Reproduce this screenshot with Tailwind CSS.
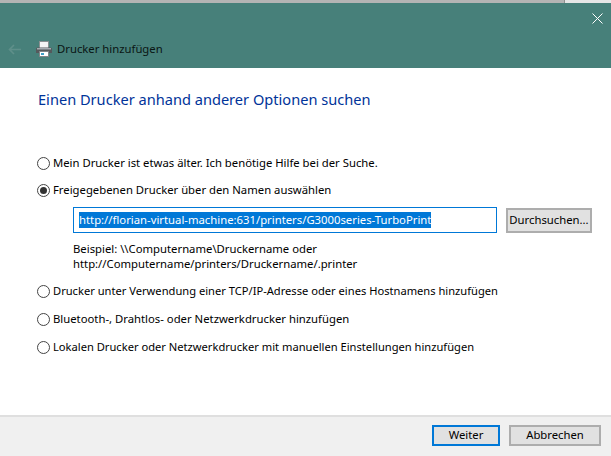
<!DOCTYPE html>
<html><head><meta charset="utf-8"><script src="https://cdn.jsdelivr.net/npm/@tailwindcss/browser@4"></script></head>
<body class="m-0">
<div class="w-[611px] h-[456px] overflow-hidden flex flex-col bg-white text-black text-[11.3px] leading-[16px] font-['Noto_Sans','Open_Sans',sans-serif]">
  <div class="h-[3px] flex shrink-0"><div class="w-[564px] bg-[#b4b4b4]"></div><div class="w-px bg-[#8e8e8e]"></div><div class="flex-1 bg-[#e6e6e6]"></div></div>
  <header class="h-[65px] bg-[#47807a] flex flex-col shrink-0 relative">
    <svg class="absolute left-[592px] top-[10px]" width="11" height="11" viewBox="0 0 11 11"><path d="M.5.5l10 10M10.5.5l-10 10" stroke="#fff" fill="none"/></svg>
    <div class="mt-[34px] flex items-center h-[24px]">
      <svg class="ml-[8px]" width="13" height="11" viewBox="0 0 13 11"><path d="M13 5.5H1.5M6 1L1.5 5.5 6 10" stroke="#5f8f8a" stroke-width="1.6" fill="none"/></svg>
      <svg class="ml-[15px]" width="16" height="16" viewBox="0 0 16 16"><rect x="3.5" y=".5" width="9" height="7" fill="#f4f4f4" stroke="#8a8f90"/><path d="M1.5 6.5h13a1.5 1.5 0 0 1 1.5 1.5v4H0V8a1.5 1.5 0 0 1 1.5-1.5z" fill="#55595c"/><rect x="1" y="7" width="14" height="1.5" fill="#a6abb0"/><rect x="3.5" y="10.5" width="9" height="5" fill="#fff" stroke="#808487"/><rect x="5" y="12" width="3" height="2" fill="#3f9fc6"/></svg>
      <span class="ml-[5px] text-[#0a1614]">Drucker hinzufügen</span>
    </div>
  </header>
  <main class="flex-1 pl-[37px] pr-[19px] flex flex-col">
    <h1 class="mt-[21px] ml-px text-[14.6px] leading-[20px] text-[#003399] font-normal">Einen Drucker anhand anderer Optionen suchen</h1>
    <div class="mt-[46px] flex flex-col">
      <label class="flex items-center h-[16px] gap-[3px]"><span class="w-[13px] h-[13px] rounded-full border border-[#444] bg-white"></span><span>Mein Drucker ist etwas älter. Ich benötige Hilfe bei der Suche.</span></label>
      <label class="mt-[11px] flex items-center h-[16px] gap-[3px]"><span class="w-[13px] h-[13px] rounded-full border border-[#444] bg-white flex items-center justify-center"><span class="w-[7px] h-[7px] rounded-full bg-[#333]"></span></span><span>Freigegebenen Drucker über den Namen auswählen</span></label>
      <div class="mt-[9px] ml-[36px] flex gap-[9px] items-center">
        <div class="w-[424px] h-[26px] border border-[#0078d7] bg-white pl-[5px] flex items-center"><span class="bg-[#0078d7] text-white h-[16px] whitespace-nowrap">http://florian-virtual-machine:631/printers/G3000series-TurboPrint</span></div>
        <button class="w-[86px] h-[25px] border-2 border-[#adadad] bg-[#e1e1e1] text-center leading-[16px]">Durchsuchen...</button>
      </div>
      <p class="mt-[8px] ml-[36px] leading-[15px]">Beispiel: \\Computername\Druckername oder<br>http://Computername/printers/Druckername/.printer</p>
      <label class="mt-[12px] flex items-center h-[16px] gap-[3px]"><span class="w-[13px] h-[13px] rounded-full border border-[#444] bg-white"></span><span class="text-[11.15px]">Drucker unter Verwendung einer TCP/IP-Adresse oder eines Hostnamens hinzufügen</span></label>
      <label class="mt-[12px] flex items-center h-[16px] gap-[3px]"><span class="w-[13px] h-[13px] rounded-full border border-[#444] bg-white"></span><span>Bluetooth-, Drahtlos- oder Netzwerkdrucker hinzufügen</span></label>
      <label class="mt-[12px] flex items-center h-[16px] gap-[3px]"><span class="w-[13px] h-[13px] rounded-full border border-[#444] bg-white"></span><span class="text-[11.15px]">Lokalen Drucker oder Netzwerkdrucker mit manuellen Einstellungen hinzufügen</span></label>
    </div>
  </main>
  <footer class="h-[41px] shrink-0 bg-[#f0f0f0] border-t-2 border-[#dfdfdf] flex justify-end items-center gap-[9px] pr-[10px] pb-[3px]">
    <button class="w-[68px] h-[21px] border-2 border-[#0078d7] bg-[#e1e1e1] leading-[16px]">Weiter</button>
    <button class="w-[92px] h-[21px] border-2 border-[#adadad] bg-[#e1e1e1] leading-[16px]">Abbrechen</button>
  </footer>
</div>
</body></html>
